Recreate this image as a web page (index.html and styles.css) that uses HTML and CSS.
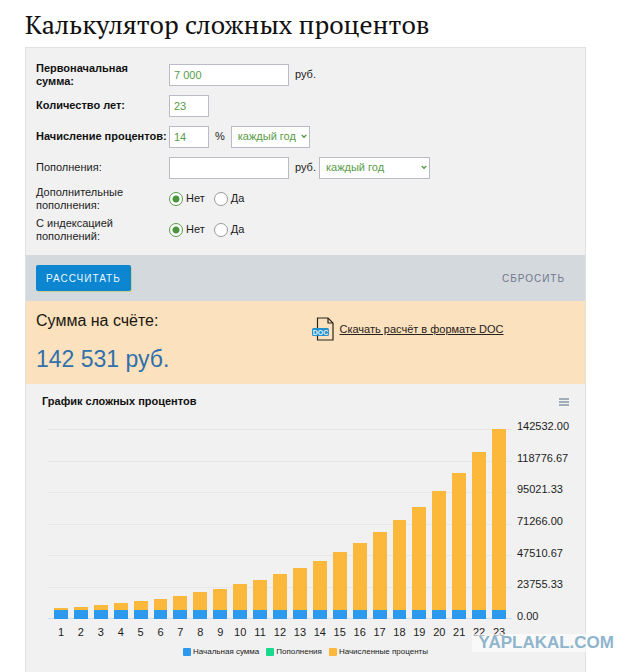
FILE: index.html
```html
<!DOCTYPE html>
<html lang="ru">

<head>
  <meta charset="UTF-8">
  <meta name="viewport" content="width=device-width, initial-scale=1">
  <title>Калькулятор сложных процентов</title>
  <link rel="stylesheet" href="styles.css">
</head>

<body>

  <h1>Калькулятор сложных процентов</h1>

  <main class="panel">
    <form id="calcForm">
      <div class="fields">
        <div class="row">
          <label class="name bold" for="sum">Первоначальная сумма:</label>
          <input class="wide" type="text" id="sum" value="7 000">
          <span class="unit">руб.</span>
        </div>

        <div class="row">
          <label class="name bold" for="years">Количество лет:</label>
          <input class="short" type="text" id="years" value="23">
        </div>

        <div class="row">
          <label class="name bold" for="rate">Начисление процентов:</label>
          <input class="short" type="text" id="rate" value="14">
          <span class="unit">%</span>
          <select class="period" aria-label="Период начисления">
            <option>каждый год</option>
            <option>каждый месяц</option>
          </select>
        </div>

        <div class="row">
          <label class="name" for="refill">Пополнения:</label>
          <input class="wide" type="text" id="refill">
          <span class="unit">руб.</span>
          <select class="period-wide" aria-label="Период пополнения">
            <option>каждый год</option>
            <option>каждый месяц</option>
          </select>
        </div>

        <div class="row" role="radiogroup" aria-labelledby="extraName">
          <span class="name" id="extraName">Дополнительные пополнения:</span>
          <label class="choice"><input type="radio" name="extra" value="0" checked> Нет</label>
          <label class="choice"><input type="radio" name="extra" value="1"> Да</label>
        </div>

        <div class="row" role="radiogroup" aria-labelledby="indexName">
          <span class="name" id="indexName">С индексацией пополнений:</span>
          <label class="choice"><input type="radio" name="index" value="0" checked> Нет</label>
          <label class="choice"><input type="radio" name="index" value="1"> Да</label>
        </div>
      </div>

      <div class="actions">
        <button class="submit" type="submit">РАССЧИТАТЬ</button>
        <button class="reset" type="reset">СБРОСИТЬ</button>
      </div>
    </form>

    <section class="result">
      <div class="total">
        <p class="caption">Сумма на счёте:</p>
        <p class="amount">142 531 руб.</p>
      </div>
      <a class="download" href="#">
        <svg width="22" height="24" viewBox="0 0 22 24" aria-hidden="true">
          <path d="M5.5 1h10.5l5 5v17h-15.5z" fill="none" stroke="#2b261f" stroke-width="1.2"/>
          <path d="M16 1v5h5" fill="none" stroke="#2b261f" stroke-width="1.2"/>
          <rect x="0" y="11" width="17" height="8" rx="1.5" fill="#2391cb"/>
          <text x="8.5" y="17.5" class="doc">DOC</text>
        </svg>
        <span>Скачать расчёт в формате DOC</span>
      </a>
    </section>

    <section class="chart">
      <header class="chart-head">
        <h2>График сложных процентов</h2>
        <button class="menu" type="button" aria-label="Меню">
          <svg width="10" height="8" viewBox="0 0 10 8"><path d="M0 1h10M0 4h10M0 7h10" stroke="#8796a6" stroke-width="1.5"/></svg>
        </button>
      </header>

      <div class="plot">
        <div class="lines"><i></i><i></i><i></i><i></i><i></i><i></i><i></i></div>
        <div class="bars" id="bars"></div>
        <div class="scale">
          <span>142532.00</span>
          <span>118776.67</span>
          <span>95021.33</span>
          <span>71266.00</span>
          <span>47510.67</span>
          <span>23755.33</span>
          <span>0.00</span>
        </div>
        <div class="numbers" id="numbers"></div>
      </div>

      <ul class="legend">
        <li><i class="start"></i>Начальная сумма</li>
        <li><i class="added"></i>Пополнения</li>
        <li><i class="interest"></i>Начисленные проценты</li>
      </ul>
    </section>
  </main>

  <div class="watermark">YAPLAKAL.COM</div>

  <script src="script.js"></script>

</body>
</html>
```
FILE: styles.css
```css
* {
  box-sizing: border-box;
}
body {
  display: flex;
  flex-direction: column;
  min-height: 100vh;
  margin: 0;
  padding: 8px 54px 0 25px;
  background: #fff;
  color: #1c1c1c;
  font: 11px/13px "Liberation Sans", Arial, sans-serif;
}
h1 {
  margin: 0 0 7px;
  color: #111;
  font: 400 26px/32px "PT Serif", "Liberation Serif", serif;
}
.panel {
  flex: 1;
  background: #f1f1f1;
  border: 1px solid #e0e2e2;
  border-bottom: none;
}
.fields {
  padding: 11px 10px 10px;
}
.row {
  display: flex;
  align-items: center;
  min-height: 31px;
}
.name {
  width: 133px;
}
.bold {
  color: #111;
  font-weight: bold;
}
.unit {
  margin: 0 3px 0 6px;
}
input[type="text"],
select {
  height: 22px;
  padding: 0 4px;
  border: 1px solid #b9bcc4;
  border-radius: 0;
  background-color: #fff;
  color: #579c48;
  font: inherit;
}
.wide {
  width: 120px;
}
.short {
  width: 40px;
}
select {
  appearance: none;
  padding: 0 6px;
  background-image: url("data:image/svg+xml,%3Csvg xmlns='http://www.w3.org/2000/svg' width='6' height='5'%3E%3Cpath d='M.7 1L3 3.3 5.3 1' fill='none' stroke='%23579c48' stroke-width='1.4'/%3E%3C/svg%3E");
  background-repeat: no-repeat;
  background-position: right 2px center;
}
.period {
  width: 79px;
  margin-left: 3px;
}
.period-wide {
  width: 111px;
}
.choice {
  display: flex;
  align-items: center;
  gap: 3px;
  margin-right: 9px;
}
input[type="radio"] {
  appearance: none;
  width: 14px;
  height: 14px;
  margin: 0;
  border: 1px solid #9a9a9a;
  border-radius: 50%;
  background: #fff;
}
input[type="radio"]:checked {
  border-color: #579c48;
  background: radial-gradient(circle, #4b9440 3px, #fff 4px);
}
button {
  border: none;
  background: none;
  font: inherit;
  cursor: pointer;
}
.actions {
  display: flex;
  align-items: center;
  justify-content: space-between;
  padding: 10px;
  background: #d4d9de;
}
.actions button {
  height: 26px;
  padding: 0 10px;
  border-radius: 2px;
  letter-spacing: 1px;
  font-size: 10px;
}
.submit {
  background: #0c86d0;
  box-shadow: 1px 1px 0 #c9cf8e;
  color: #e9f6ff;
}
.actions .reset {
  color: #70788a;
}
.result {
  display: grid;
  grid-template-columns: 1fr 1fr;
  align-items: start;
  padding: 10px 10px 9px;
  background: #fbe1bd;
}
.caption {
  margin: 0 0 12px;
  color: #1a1611;
  font-size: 16px;
  line-height: 20px;
}
.amount {
  margin: 0;
  color: #2f70ad;
  font-size: 23px;
  line-height: 32px;
}
.download {
  display: flex;
  align-items: center;
  gap: 6px;
  padding: 6px;
  color: #28221a;
  text-decoration: none;
}
.download span {
  text-decoration: underline;
}
.doc {
  fill: #e2f4fb;
  font-size: 7px;
  font-weight: bold;
  text-anchor: middle;
}
.chart {
  padding: 10px 16px;
}
.chart-head {
  display: flex;
  align-items: center;
  justify-content: space-between;
  margin-bottom: 20px;
}
h2 {
  margin: 0;
  color: #111;
  font-size: 11px;
  line-height: 15px;
}
.menu {
  display: flex;
  padding: 0;
}
.plot {
  display: grid;
  grid-template-columns: 1fr 52px;
  grid-template-rows: 190px auto;
  column-gap: 5px;
  padding-left: 6px;
}
.lines,
.bars {
  grid-area: 1 / 1;
}
.lines {
  display: flex;
  flex-direction: column;
  justify-content: space-between;
}
.lines i {
  height: 1px;
  background: #e5e6e8;
}
.lines i:last-child {
  background: #d3dfed;
}
.bars,
.numbers {
  display: grid;
  grid-template-columns: repeat(23, 1fr);
  padding: 0 3px;
}
.bars {
  align-items: end;
}
.bar {
  display: flex;
  flex-direction: column;
  height: 100%;
  justify-content: flex-end;
  padding: 0 3px;
}
.start {
  background: #2c99ef;
}
.added {
  background: #19d98f;
}
.interest {
  background: #fbb83a;
}
.scale {
  display: flex;
  flex-direction: column;
  justify-content: space-between;
  margin: -9px 0 -4px;
}
.numbers {
  grid-area: 2 / 1;
  padding-top: 7px;
  text-align: center;
}
.legend {
  display: flex;
  justify-content: center;
  gap: 7px;
  margin: 6px 0 0;
  padding: 0;
  font-size: 8px;
  list-style: none;
}
.legend li {
  display: flex;
  align-items: center;
  gap: 2px;
}
.legend i {
  width: 8px;
  height: 8px;
  border-radius: 1px;
}
.watermark {
  position: absolute;
  top: 634px;
  right: 0;
  padding: 0 26px 0 7px;
  background: rgba(255, 255, 255, .6);
  color: #8fb5cd;
  font-size: 17px;
  font-weight: bold;
  line-height: 18px;
}
```
FILE: script.js
```js
const start = 7000;
const rate = 0.14;
const years = 23;
const max = 142532;

const bars = document.getElementById('bars');
const numbers = document.getElementById('numbers');

for (let year = 1; year <= years; year++) {
  const total = start * Math.pow(1 + rate, year);
  const interest = (total - start) / max * 100;

  bars.innerHTML += `
    <div class="bar">
      <div class="interest" style="height:${interest}%"></div>
      <div class="start" style="height:${start / max * 100}%"></div>
    </div>`;
  numbers.innerHTML += `<span>${year}</span>`;
}

document.getElementById('calcForm').addEventListener('submit', function(e) {
  e.preventDefault();
});
```
